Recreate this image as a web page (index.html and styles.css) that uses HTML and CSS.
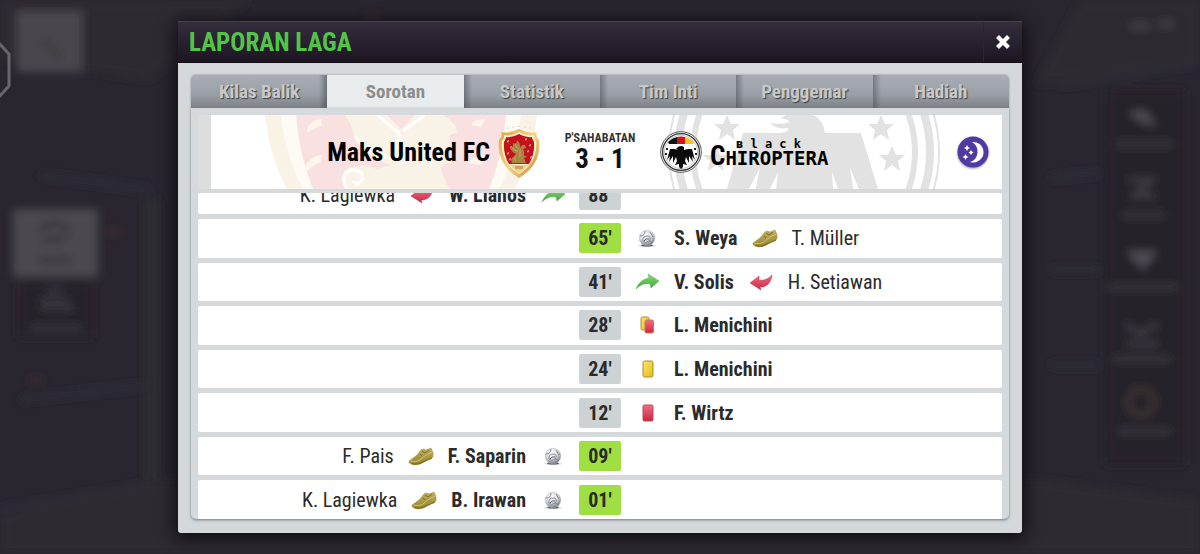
FILE: index.html
```
<!DOCTYPE html>
<html lang="id">
<head>
  <meta charset="UTF-8">
  <meta name="viewport" content="width=device-width, initial-scale=1">
  <title>Laporan Laga</title>
  <link rel="stylesheet" href="styles.css">
</head>
<body>

  <!-- Shared icons -->
  <svg class="sprite" aria-hidden="true">
    <defs>
      <linearGradient id="gGreen" x1="0" y1="0" x2="0" y2="1"><stop offset="0" stop-color="#8fd877"/><stop offset="1" stop-color="#3fa63c"/></linearGradient>
      <linearGradient id="gRed" x1="0" y1="0" x2="0" y2="1"><stop offset="0" stop-color="#ef6f84"/><stop offset="1" stop-color="#cc2440"/></linearGradient>
      <linearGradient id="gYellow" x1="0" y1="0" x2="1" y2="1"><stop offset="0" stop-color="#fbe56a"/><stop offset="1" stop-color="#e6bd10"/></linearGradient>
      <linearGradient id="gBoot" x1="0" y1="0" x2="0" y2="1"><stop offset="0" stop-color="#bfae5c"/><stop offset="1" stop-color="#97842f"/></linearGradient>
      <linearGradient id="gGold" x1="0" y1="0" x2="1" y2="1"><stop offset="0" stop-color="#d9a443"/><stop offset="0.5" stop-color="#f4d489"/><stop offset="1" stop-color="#c48a2c"/></linearGradient>
      <radialGradient id="gBall" cx="0.4" cy="0.3" r="0.75"><stop offset="0" stop-color="#fff"/><stop offset="0.55" stop-color="#d3d6db"/><stop offset="1" stop-color="#666b73"/></radialGradient>
    </defs>
    <symbol id="in" viewBox="0 0 26 22">
      <path d="M2 18C5 11 9 8 15 7L14 3L25 10L17 17L16 13C10 12 6 14 2 18Z" fill="url(#gGreen)" stroke="#58b050" stroke-width="0.5"/>
    </symbol>
    <symbol id="out" viewBox="0 0 26 22">
      <path d="M24 4C23 12 19 16 12 16L13 19L2 12L11 5L11 9C16 10 20 8 24 4Z" fill="url(#gRed)" stroke="#c22d45" stroke-width="0.5"/>
    </symbol>
    <symbol id="ball" viewBox="0 0 26 22">
      <ellipse cx="13" cy="18.800" rx="9" ry="1.500" fill="#dcdde0"/>
      <ellipse cx="13" cy="18.300" rx="6" ry="1.200" fill="#55585e"/>
      <circle cx="13" cy="11" r="7.800" fill="url(#gBall)" stroke="#b4b8be" stroke-width="0.500"/>
      <path d="M6 9Q11 9 11 4M9 14Q8 9 14 9Q18 10 15 14Q11 17 9 14ZM16 5L19 10M15 14L18 15" fill="none" stroke="#858b95" stroke-width="1"/>
      <path d="M10 14Q12 11 15 12" fill="none" stroke="#5d636c" stroke-width="1"/>
    </symbol>
    <symbol id="boot" viewBox="0 0 26 22">
      <path d="M1 16C5 13 9 11 12 6Q13 4 16 4L18 5L23 3Q26 8 25 12Q23 14 19 15Q13 20 7 20Q0 19 1 16Z" fill="url(#gBoot)" stroke="#a8943f" stroke-width="0.500"/>
      <path d="M2 16Q8 18 12 15L18 10L24 7" fill="none" stroke="#cfc079" stroke-width="1"/>
      <path d="M14 6L17 8L21 5M12 9L14 11" fill="none" stroke="#77651f" stroke-width="0.900"/>
      <path d="M4 18.500Q10 20 15 17L24 13" fill="none" stroke="#7d6a20" stroke-width="1.100"/>
    </symbol>
    <symbol id="yellow" viewBox="0 0 26 22">
      <rect x="9" y="3" width="10" height="16" rx="1.500" fill="url(#gYellow)" stroke="#a88d38" stroke-width="1"/>
    </symbol>
    <symbol id="red" viewBox="0 0 26 22">
      <rect x="9" y="3" width="10" height="16" rx="1.500" fill="url(#gRed)" stroke="#b04a57" stroke-width="1"/>
    </symbol>
    <symbol id="second" viewBox="0 0 26 22">
      <rect x="7" y="3" width="8" height="13" rx="1.500" fill="url(#gYellow)" stroke="#a88d38" stroke-width="1"/>
      <rect x="11" y="6" width="8.500" height="13" rx="1.500" fill="url(#gRed)" stroke="#c07a5c" stroke-width="1"/>
    </symbol>

    <symbol id="crest" viewBox="0 0 42 52">
      <path d="M21 3Q30 8 39 6Q37 10 41 14Q44 38 21 52Q-2 38 1 14Q5 10 3 6Q12 8 21 3Z" fill="url(#gGold)"/>
      <path d="M21 6Q29 11 36 9Q35 12 38 15Q40 36 21 48Q2 36 4 15Q7 12 6 9Q13 11 21 6Z" fill="#fff3cf"/>
      <path d="M21 8Q28 12 34 11Q34 13 36 16Q37 28 31 38H11Q5 28 6 16Q8 13 8 11Q14 12 21 8Z" fill="#c4121d"/>
      <path d="M9 15l2 -1l-1 3zM12 21l2 -1l-1 3zM9 27l2 -1l-1 3zM27 13l2 -1l-1 3zM31 19l2 -1l-1 3zM29 25l2 -1l-1 3zM32 31l2 -1l-1 3zM11 33l2 -1l-1 3z" fill="#f8e0b0"/>
      <path d="M14 37Q12 33 15 31L18 28Q13 26 12 21Q16 22 15 17Q19 19 19 14Q23 18 22 22Q24 18 27 19L28 22L25 23Q27 26 26 29L29 31L26 32L28 37Z" fill="#a98342"/>
      <path d="M14 22Q17 25 20 25M17 18Q18 22 21 23M22 24V31M18 35Q15 33 18 31" fill="none" stroke="#dcb76c" stroke-width="0.700"/>
      <path d="M12 39H30Q26 44 21 47Q16 44 12 39Z" fill="#f0cf8b"/>
      <path d="M17 40h8v3h-8z" fill="#c9a561"/>
      <path d="M9 2h2M14 1h2M20 0.500h2M26 1h2M31 2h2" stroke="#e9d6b0" stroke-width="1.200"/>
    </symbol>

    <symbol id="crestMark" viewBox="0 0 272 74">
      <path d="M0 0H272Q268 40 250 74H22Q4 40 0 0Z" fill="#f8f3e6"/>
      <path d="M16 0H256Q252 40 234 74H38Q20 40 16 0Z" fill="#fdfbf4"/>
      <path d="M31 0H241Q238 40 224 74H48Q34 40 31 0Z" fill="#f9e1e1"/>
      <path d="M80 0H122L136 14L150 0H178Q192 8 192 18Q178 18 190 34Q178 34 186 48Q172 48 178 60L184 74H82Q72 62 82 54Q96 48 112 54L126 50Q96 40 90 24Q88 12 80 0Z" fill="#f8f3e6"/>
      <path d="M112 0L134 18V34M160 0L138 16M82 74Q74 60 86 55Q98 54 98 64Q92 72 88 66M90 22Q106 40 130 44" fill="none" stroke="#fff" stroke-width="3"/>
      <path d="M42 14Q46 4 58 4Q54 8 58 10Q50 12 42 18ZM40 52Q46 40 58 40Q54 44 56 47Q48 50 42 56ZM206 10Q210 4 220 4L216 12ZM204 48Q210 40 220 40L216 50Z" fill="#fdf6ea"/>
    </symbol>

    <symbol id="eagle" viewBox="0 0 42 42">
      <circle cx="21" cy="21" r="20.300" fill="#fff" stroke="#555" stroke-width="1"/>
      <circle cx="21" cy="21" r="18.400" fill="none" stroke="#333" stroke-width="1.300"/>
      <circle cx="21" cy="21" r="16.600" fill="none" stroke="#888" stroke-width="0.500"/>
      <path d="M17 13V6Q12 7 8 11L9 13Z" fill="#111"/>
      <path d="M17 6Q21 5 25 6V13H17Z" fill="#d4141c"/>
      <path d="M25 6Q30 7 34 11L33 13H25Z" fill="#f6c318"/>
      <path d="M18 16Q21 14 24 16L24 19L28 18H32L35 29L32 25L33 31L29 25L29 32L26 26L25 30L27 34L23 33L23 36L21 38L19 36L19 33L15 34L17 30L16 26L13 32L13 25L9 31L10 25L7 29L10 18H14L19 19L16 18Z" fill="#0c0c0c"/>
      <path d="M6 17h2v2h-2zM5 22h2v2h-2zM34 17h2v2h-2zM35 22h2v2h-2z" fill="#222"/>
    </symbol>

    <symbol id="eagleMark" viewBox="0 0 272 272">
      <g fill="none" stroke="#e2e2e2">
        <circle cx="136" cy="136" r="135" stroke-width="2"/>
        <circle cx="136" cy="136" r="126" stroke-width="8"/>
        <circle cx="136" cy="136" r="111" stroke-width="6"/>
      </g>
      <g fill="#e2e2e2">
        <path d="M112 103Q118 97 132 97Q154 96 157 117H193L215 190H198L182 152L188 190H176L164 156L166 190H106L110 156L94 190H84L92 152L72 190H54L75 117H108Q122 117 120 112Q108 114 102 107Q114 109 122 106Q118 102 112 103Z"/>
        <path id="star" d="M0 -13L4 -4H13L6 2L8 12L0 6L-8 12L-6 2L-13 -4H-4Z" transform="translate(213 112)"/>
        <use href="#star" x="11" y="31"/>
        <use href="#star" x="-154"/>
        <use href="#star" x="-165" y="31"/>
      </g>
    </symbol>
  </svg>

  <!-- Blurred game menu behind the dialog -->
  <svg class="backdrop" viewBox="0 0 1200 554" preserveAspectRatio="xMidYMid slice" aria-hidden="true">
    <defs>
      <filter id="soft" x="-10%" y="-10%" width="120%" height="120%"><feGaussianBlur stdDeviation="4"/></filter>
    </defs>
    <rect width="1200" height="554" fill="#29262f"/>
    <g filter="url(#soft)">
      <path d="M0 0H250L150 80L0 60ZM0 515L160 480H1040L1200 500V554H0Z" fill="#2e2b30"/>
      <path d="M1035 85L1200 60V0H1080Z" fill="#2e2b31"/>
      <path d="M40 175L150 190M20 400L150 385M1050 178L1100 173M1050 270H1100M1050 365H1100M0 510L150 485M1060 85L1200 62" stroke="#2f2d38" stroke-width="5"/>
      <path d="M152 200V480" stroke="#2e2d33" stroke-width="14"/>
      <path d="M1105 90H1185V465H1105Z" fill="#262329"/>
      <rect x="17" y="11" width="65" height="61" fill="#4a474d"/>
      <path d="M42 40L62 58" stroke="#423f45" stroke-width="10"/>
      <rect x="13" y="209" width="85" height="68" fill="#4c494f"/>
      <path d="M40 232Q54 214 70 232M42 241L66 238M38 260H72" fill="none" stroke="#35323a" stroke-width="5"/>
      <rect x="18" y="282" width="75" height="56" fill="#262329"/>
      <path d="M48 290H62M40 300H70M40 308H74M30 328H82" stroke="#38353c" stroke-width="6"/>
      <path d="M1130 26H1150M1158 24H1174" stroke="#444147" stroke-width="6"/>
      <path d="M1127 112L1145 110L1157 126L1140 122ZM1126 251H1158L1143 270Z" fill="#4e4b52"/>
      <path d="M1128 180H1152L1134 196H1156M1126 324L1140 334L1158 324M1126 344H1158" fill="none" stroke="#403d44" stroke-width="5"/>
      <path d="M1115 144H1173M1122 215H1165M1108 287H1178M1112 359H1172M1117 431H1172" stroke="#37343b" stroke-width="7"/>
      <circle cx="1141" cy="402" r="13" fill="none" stroke="#3b3433" stroke-width="6"/>
      <path d="M365 16H378M104 232H122M28 380H44" stroke="#3f292e" stroke-width="5"/>
    </g>
    <path d="M-2 42L9 54V86L-2 98" fill="none" stroke="#68656c" stroke-width="3"/>
  </svg>

  <main class="dialog" role="dialog" aria-labelledby="title">
    <header class="dialog-header">
      <h1 id="title">LAPORAN LAGA</h1>
      <button class="close" aria-label="Tutup">
        <svg viewBox="0 0 16 16"><path d="M4 4L12 12M12 4L4 12" stroke="#fff" stroke-width="4.200" stroke-linecap="square"/></svg>
      </button>
    </header>

    <div class="dialog-body">
      <nav class="tabs">
        <button class="tab before-active">Kilas Balik</button>
        <button class="tab active">Sorotan</button>
        <button class="tab">Statistik</button>
        <button class="tab">Tim Inti</button>
        <button class="tab">Penggemar</button>
        <button class="tab">Hadiah</button>
      </nav>

      <div class="panel">
        <!-- Score line -->
        <section class="score">
          <svg class="mark mark-home" viewBox="0 0 272 74" aria-hidden="true"><use href="#crestMark"/></svg>
          <svg class="mark mark-away" viewBox="0 0 272 272" aria-hidden="true"><use href="#eagleMark"/></svg>
          <div class="team home">
            <h2>Maks United FC</h2>
            <svg class="badge-home"><use href="#crest"/></svg>
          </div>
          <div class="result">
            <span class="kind">P'SAHABATAN</span>
            <strong class="goals">3 - 1</strong>
          </div>
          <div class="team away">
            <svg class="badge-away"><use href="#eagle"/></svg>
            <h2 class="fancy"><span class="over">ʙ l a c k</span><span class="under"><b>C</b>HIROPTERA</span></h2>
            <svg class="night" viewBox="0 0 32 32">
              <circle cx="16" cy="16" r="15.500" fill="#4f3ba0"/>
              <path d="M15 6A10.300 10.300 0 1 1 13 26A11 11 0 0 0 15 6Z" fill="#fff"/>
              <path d="M10 9l1 2l2 1l-2 1l-1 2l-1 -2l-2 -1l2 -1zM14 14l1 1.500l1.500 1l-1.500 1l-1 1.500l-1 -1.500l-1.500 -1l1.500 -1zM8.500 18l1 2l2 1l-2 1l-1 2l-1 -2l-2 -1l2 -1z" fill="#fff"/>
            </svg>
          </div>
        </section>

        <!-- Match events, newest first -->
        <ol class="events">
          <li class="event clipped">
            <div class="side left"><span>K. Lagiewka</span><svg><use href="#out"/></svg><b>W. Llanos</b><svg><use href="#in"/></svg></div>
            <time>88'</time>
            <div class="side"></div>
          </li>
          <li class="event">
            <div class="side left"></div>
            <time class="goal">65'</time>
            <div class="side"><svg><use href="#ball"/></svg><b>S. Weya</b><svg><use href="#boot"/></svg><span>T. Müller</span></div>
          </li>
          <li class="event">
            <div class="side left"></div>
            <time>41'</time>
            <div class="side"><svg><use href="#in"/></svg><b>V. Solis</b><svg><use href="#out"/></svg><span>H. Setiawan</span></div>
          </li>
          <li class="event">
            <div class="side left"></div>
            <time>28'</time>
            <div class="side"><svg><use href="#second"/></svg><b>L. Menichini</b></div>
          </li>
          <li class="event">
            <div class="side left"></div>
            <time>24'</time>
            <div class="side"><svg><use href="#yellow"/></svg><b>L. Menichini</b></div>
          </li>
          <li class="event">
            <div class="side left"></div>
            <time>12'</time>
            <div class="side"><svg><use href="#red"/></svg><b>F. Wirtz</b></div>
          </li>
          <li class="event">
            <div class="side left"><span>F. Pais</span><svg><use href="#boot"/></svg><b>F. Saparin</b><svg><use href="#ball"/></svg></div>
            <time class="goal">09'</time>
            <div class="side"></div>
          </li>
          <li class="event">
            <div class="side left"><span>K. Lagiewka</span><svg><use href="#boot"/></svg><b>B. Irawan</b><svg><use href="#ball"/></svg></div>
            <time class="goal">01'</time>
            <div class="side"></div>
          </li>
        </ol>
      </div>
    </div>
  </main>

</body>
</html>
```
FILE: styles.css
```
* { box-sizing: border-box; }

body {
  margin: 0;
  height: 100vh;
  display: flex;
  padding: 21px 178px;
  background: #29262f;
  color: #2b2b2b;
  font-family: "Roboto Condensed", "Liberation Sans Narrow", "Liberation Sans", sans-serif;
  overflow: hidden;
}
h1, h2, ol { margin: 0; padding: 0; }
button { font: inherit; border: 0; padding: 0; cursor: pointer; }

.sprite { position: absolute; width: 0; height: 0; }
.backdrop { position: absolute; inset: 0; width: 100%; height: 100%; }

/* Dialog */
.dialog {
  position: relative;
  flex: 1;
  display: flex;
  flex-direction: column;
  border-radius: 3px;
  box-shadow: 0 3px 16px 3px rgba(12, 8, 14, 0.85);
}
.dialog-header {
  height: 42px;
  flex: none;
  display: flex;
  align-items: center;
  justify-content: space-between;
  padding-left: 11px;
  background: linear-gradient(#352d3c, #1d1522);
  border-top: 1px solid #48424f;
  border-bottom: 1px solid #120d15;
}
.dialog-header h1 { color: #52c549; font-size: 25px; line-height: 40px; padding-top: 2px; }
.close {
  width: 39px;
  height: 40px;
  display: grid;
  place-items: center;
  background: none;
  border-left: 1px solid #2b2431;
}
.close svg { width: 16px; height: 16px; }
.dialog-body {
  flex: 1;
  min-height: 0;
  display: flex;
  flex-direction: column;
  padding: 12px 13px 14px;
  background: #d4d8db;
  border-radius: 0 0 3px 3px;
}

/* Tabs */
.tabs {
  flex: none;
  display: flex;
  height: 33px;
  border-radius: 5px 5px 0 0;
  overflow: hidden;
  box-shadow: 0 0 2px #777c82;
}
.tab {
  flex: 1;
  font-size: 19px;
  font-weight: bold;
  color: #c8caca;
  text-shadow: 1px 1px 1px #3f4246;
  background: linear-gradient(90deg, rgba(70, 74, 80, 0.5), transparent 8px), linear-gradient(#a9aeb6, #9a9fa6 60%, #7c8086);
}
.tab.before-active { background: linear-gradient(270deg, rgba(70, 74, 80, 0.6), transparent 8px), linear-gradient(#a9aeb6, #9a9fa6 60%, #7c8086); }
.tab.active { background: #e9eced; color: #8b8d8f; text-shadow: none; }

.panel {
  flex: 1;
  min-height: 0;
  display: flex;
  flex-direction: column;
  gap: 4px;
  padding: 7px 7px 0;
  background: #d5d9dc;
  border-radius: 0 0 5px 5px;
  box-shadow: 0 1px 3px #74797e;
}

/* Score line */
.score {
  position: relative;
  flex: none;
  height: 74px;
  display: grid;
  grid-template-columns: 1fr 120px 1fr;
  align-items: center;
  background: #fff;
  border-left: 13px solid #dcdddd;
  padding-right: 13px;
  overflow: hidden;
}
.mark { position: absolute; top: 50%; transform: translate(-50%, -50%); }
.mark-home { left: 24%; width: 272px; height: 74px; }
.mark-away { left: 75%; width: 272px; height: 272px; }
.team { position: relative; display: flex; align-items: center; }
.home { justify-content: flex-end; gap: 8px; }
.team h2 { font-size: 26px; line-height: 32px; color: #000; white-space: nowrap; }
.badge-home { width: 42px; height: 54px; }
.badge-away { width: 42px; height: 44px; }
.result { position: relative; display: flex; flex-direction: column; align-items: center; color: #111; }
.kind { font-size: 12px; line-height: 14px; font-weight: bold; color: #333; }
.goals { font-size: 27px; line-height: 28px; }
.team .fancy { display: flex; flex-direction: column; margin-left: 8px; }
.over { font: bold 12px/10px "DejaVu Sans Mono", monospace; padding-left: 26px; }
.under { font: bold 19px/14px "DejaVu Sans Mono", monospace; }
.under b { font: bold 27px/14px "Roboto Condensed", "Liberation Sans Narrow", sans-serif; }
.night { width: 32px; height: 32px; margin-left: auto; filter: drop-shadow(0 1px 1px #999); }

/* Events */
.events {
  flex: 1;
  min-height: 0;
  display: grid;
  grid-template-rows: 21px repeat(7, 1fr);
  gap: 5px;
  list-style: none;
  font-size: 20px;
}
.event {
  display: grid;
  grid-template-columns: 1fr 42px 1fr;
  align-items: center;
  background: #fff;
  border-radius: 2px;
}
.event.clipped { grid-template-rows: 39px; align-content: end; overflow: hidden; }
.event time {
  height: 30px;
  line-height: 30px;
  text-align: center;
  font-weight: bold;
  background: #cdd2d5;
  border-radius: 2px;
}
.event time.goal { background: #a0df42; }
.side { display: flex; align-items: center; gap: 14px; padding: 0 13px; white-space: nowrap; }
.side.left { justify-content: flex-end; }
.side svg { width: 26px; height: 22px; flex: none; }
```
